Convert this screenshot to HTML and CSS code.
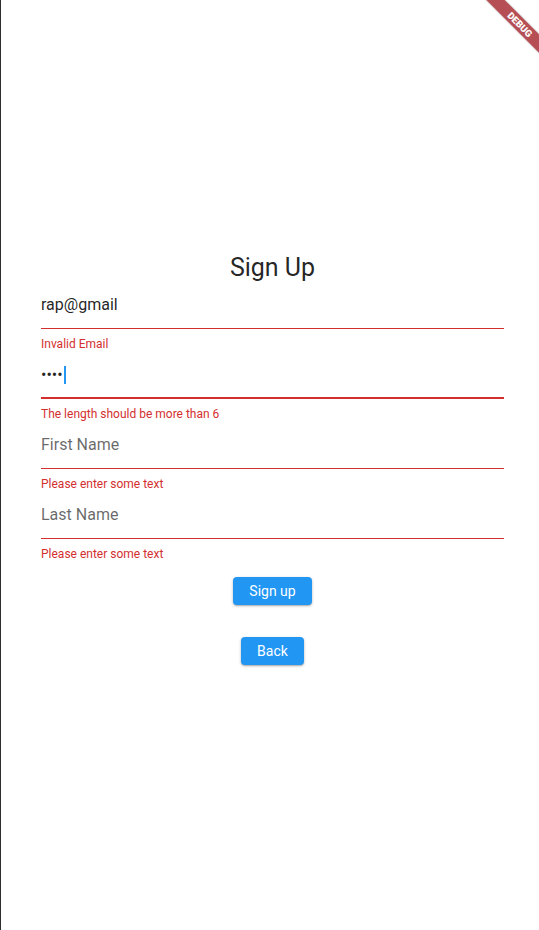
FILE: index.html
```html
<!DOCTYPE html>
<html lang="en">
<head>
<meta charset="utf-8">
<title>Sign Up</title>
<link rel="stylesheet" href="styles.css">
</head>
<body>
<div class="screen">
  <main class="form">
    <h1 class="title">Sign Up</h1>

    <div class="field">
      <div class="input">rap@gmail</div>
      <div class="error">Invalid Email</div>
    </div>

    <div class="field">
      <div class="input input--focused"><span class="dots">••••</span><span class="cursor"></span></div>
      <div class="error">The length should be more than 6</div>
    </div>

    <div class="field">
      <div class="input input--hint">First Name</div>
      <div class="error">Please enter some text</div>
    </div>

    <div class="field">
      <div class="input input--hint">Last Name</div>
      <div class="error">Please enter some text</div>
    </div>

    <div class="actions">
      <button class="btn" type="button">Sign up</button>
      <button class="btn" type="button">Back</button>
    </div>
  </main>

  <div class="debug-banner">DEBUG</div>
</div>
</body>
</html>
```

FILE: styles.css
```css
html, body {
  margin: 0;
  padding: 0;
  background: #ffffff;
}

body {
  font-family: Roboto, "Noto Sans", "Liberation Sans", sans-serif;
}

.screen {
  position: relative;
  width: 539px;
  height: 930px;
  box-sizing: border-box;
  border-left: 1px solid #2e2e2e;
  overflow: hidden;
  background: #ffffff;
}

.form {
  padding: 256px 35px 0 40px;
  display: flex;
  flex-direction: column;
}

.title {
  margin: 0;
  font-size: 25px;
  font-weight: 400;
  line-height: 24px;
  text-align: center;
  color: rgba(0, 0, 0, 0.87);
}

.field {
  display: flex;
  flex-direction: column;
}

.input {
  padding: 13px 0 11px;
  font-size: 16px;
  line-height: 24px;
  height: 24px;
  color: rgba(0, 0, 0, 0.87);
  border-bottom: 1px solid #d32f2f;
  display: flex;
  align-items: center;
}

.input--focused {
  padding-bottom: 10px;
  border-bottom: 2px solid #d32f2f;
}

.input--hint {
  color: rgba(0, 0, 0, 0.6);
}

.cursor {
  display: inline-block;
  width: 2px;
  height: 18px;
  margin-left: 1px;
  background: #2196f3;
}

.error {
  padding-top: 9px;
  font-size: 12px;
  line-height: 12px;
  color: #d32f2f;
}

.actions {
  display: flex;
  flex-direction: column;
  align-items: center;
  gap: 32px;
  padding-top: 17px;
}

.btn {
  height: 28px;
  padding: 0 16px;
  border: none;
  border-radius: 4px;
  background: #2196f3;
  color: #ffffff;
  font-family: Roboto, "Noto Sans", "Liberation Sans", sans-serif;
  font-size: 14px;
  font-weight: 400;
  line-height: 28px;
  box-shadow: 0 1px 3px rgba(0, 0, 0, 0.25), 0 1px 1px rgba(0, 0, 0, 0.14);
  cursor: pointer;
}

.debug-banner {
  position: absolute;
  left: 469px;
  top: 18px;
  width: 100px;
  height: 13px;
  transform: rotate(45deg);
  background: rgba(166, 40, 48, 0.82);
  color: #ffffff;
  font-family: Roboto, "Liberation Sans", sans-serif;
  font-size: 9.5px;
  font-weight: 900;
  line-height: 13px;
  text-align: center;
  box-shadow: 0 0 2px rgba(0, 0, 0, 0.3);
}
```
